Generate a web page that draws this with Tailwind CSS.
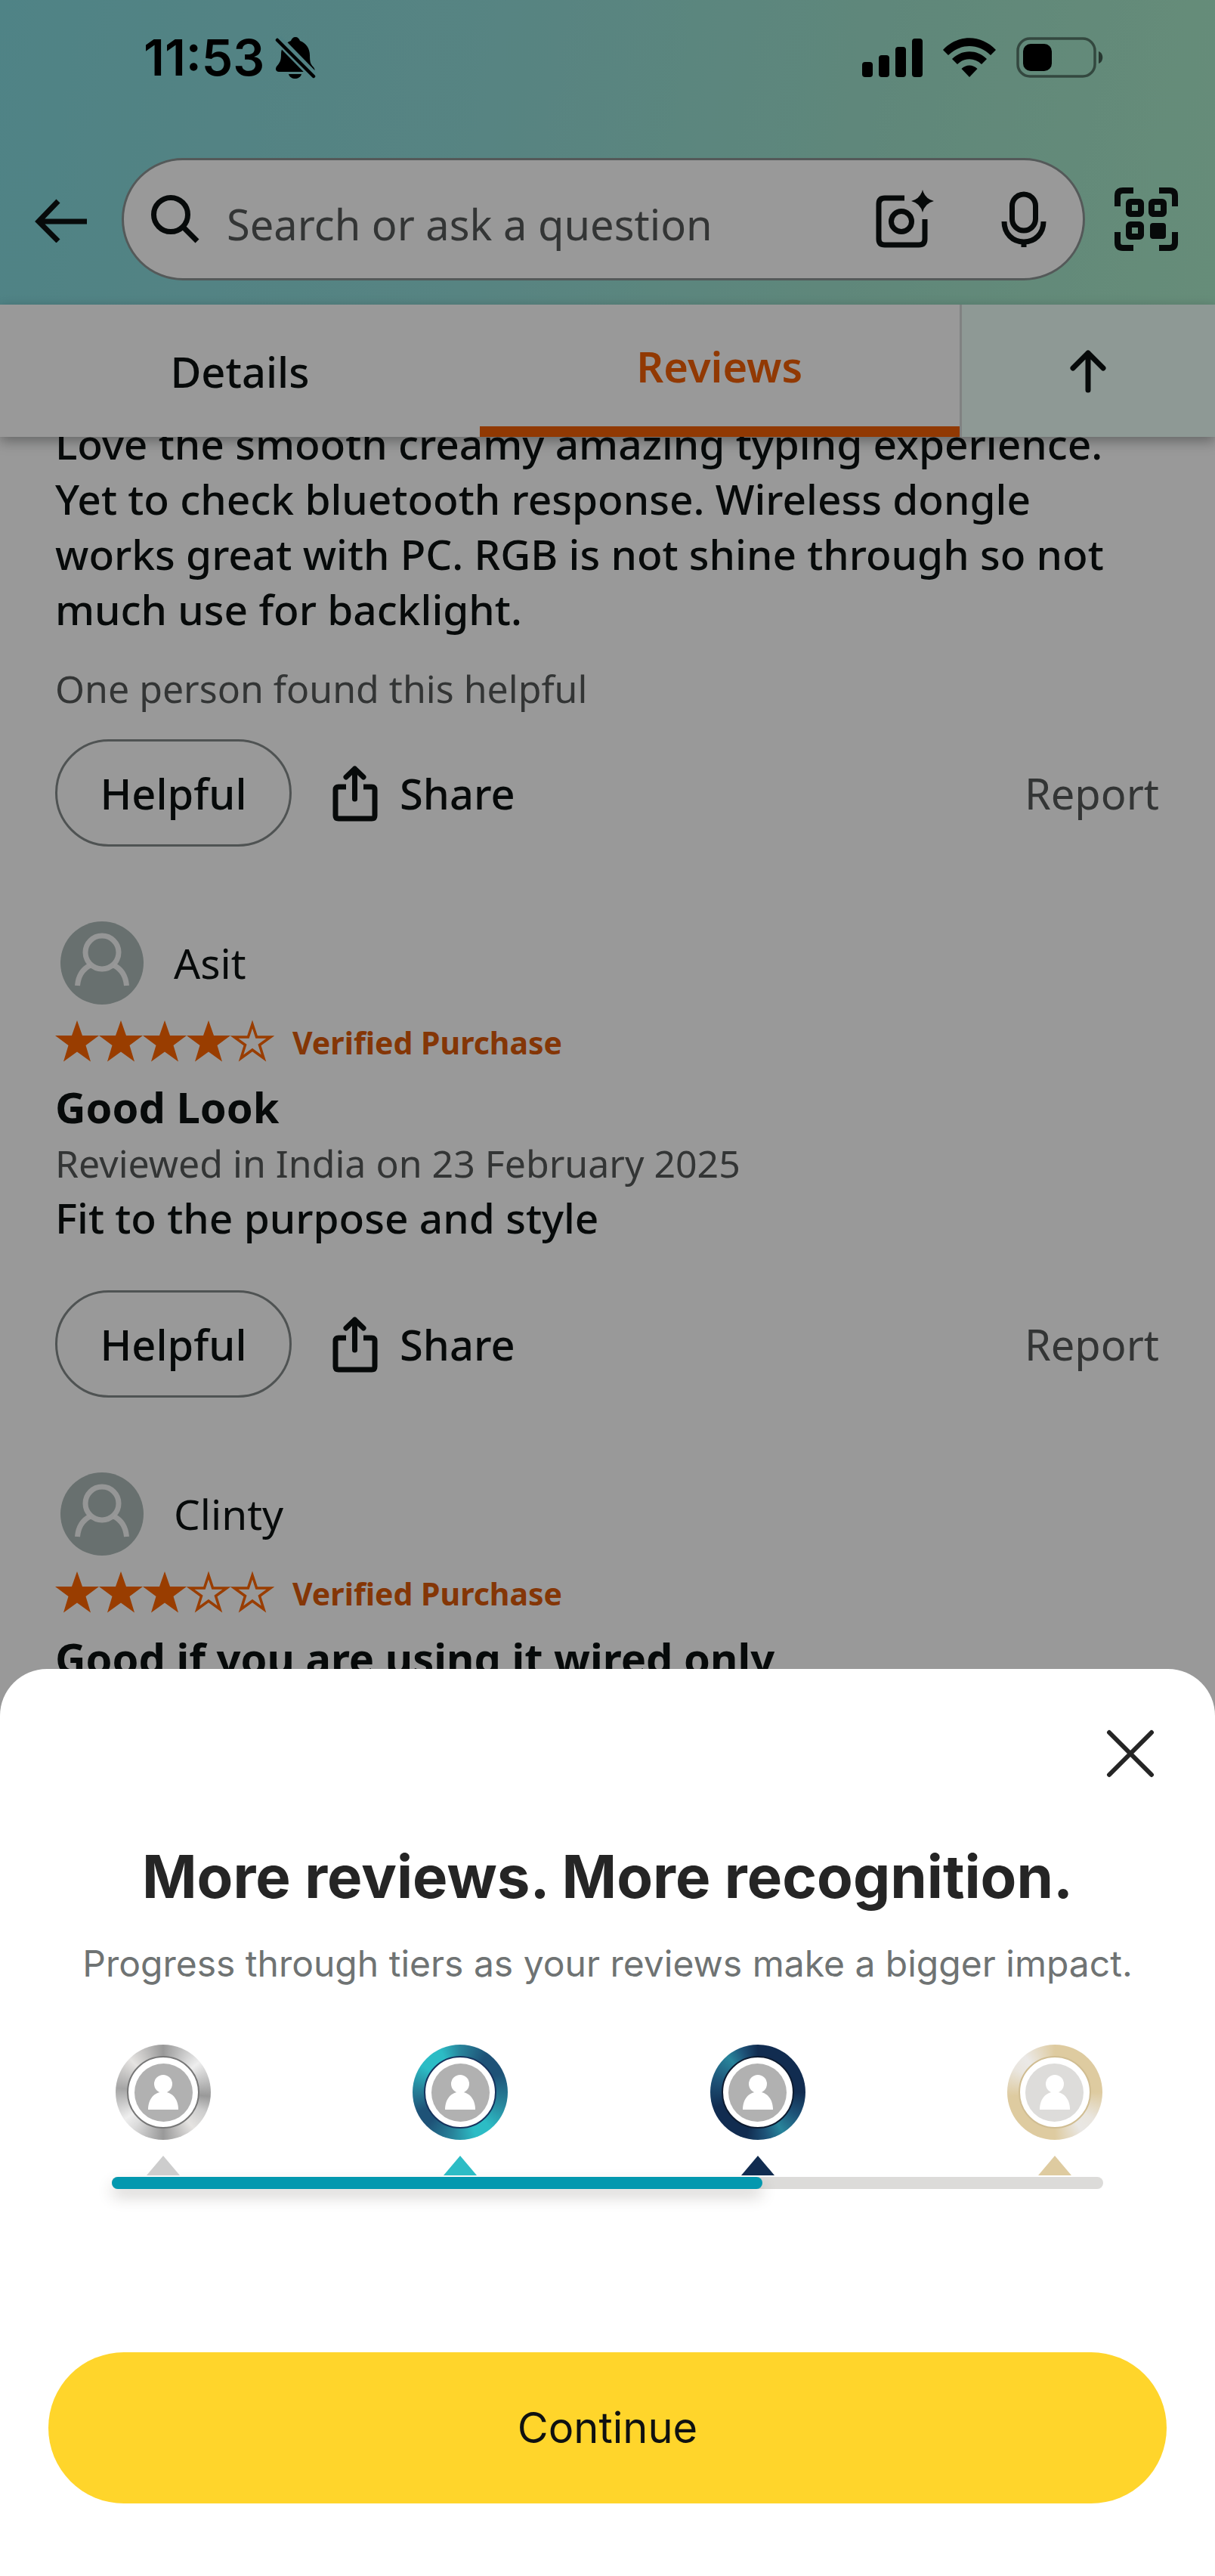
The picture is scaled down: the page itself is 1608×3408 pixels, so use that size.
<!DOCTYPE html>
<html lang="en">
<head>
<meta charset="utf-8">
<meta name="viewport" content="width=device-width, initial-scale=1">
<title>Reviews</title>
<script src="https://cdn.jsdelivr.net/npm/@tailwindcss/browser@4"></script>
</head>
<body class="relative h-screen overflow-hidden bg-white font-['Noto_Sans',sans-serif] text-[#0c1111]">

<svg class="hidden" aria-hidden="true">
  <defs>
    <symbol id="star" viewBox="0 0 58 56"><path d="M29 1l7 20h22L40.500 34 47 55.500 29 42.500 11 55.500 17.500 34 0 21h22z" fill="#ff6600"/></symbol>
    <symbol id="star-empty" viewBox="0 0 58 56"><path d="M29 6l5.600 17H53L38.500 33.500l5.500 17.500-15-11-15 11 5.500-17.500L5 23h18.400z" fill="none" stroke="#ff6600" stroke-width="3.500"/></symbol>
    <symbol id="avatar" viewBox="0 0 110 110">
      <circle cx="55" cy="55" r="55" fill="#aebbb9"/>
      <g fill="none" stroke="#fff" stroke-opacity=".92" stroke-width="7"><circle cx="55" cy="41" r="22"/><path d="M22.500 85c1-12 7-22 17-27M87.500 85c-1-12-7-22-17-27"/></g>
    </symbol>
    <symbol id="share" viewBox="0 0 60 76">
      <g fill="none" stroke="#0c1111" stroke-width="7" stroke-linecap="round" stroke-linejoin="round"><path stroke-linecap="butt" d="M18 30H8q-4 0-4 4v34q0 4 4 4h44q4 0 4-4V34q0-4-4-4H41"/><path d="M29.500 46V6M18 17L29.500 6 41 17"/></g>
    </symbol>
    <symbol id="person" viewBox="0 0 40 46"><circle cx="20" cy="12" r="12" fill="#fff"/><path d="M0 46C0 32 8 22.500 20 22.500S40 32 40 46z" fill="#fff"/></symbol>
  </defs>
</svg>

<header class="bg-linear-[100deg,#84dadf,#91dcd9_40%,#a1e3cb_75%,#abebca] h-[403px]">
  <div class="flex h-[152px] items-center justify-between pr-[148px] pl-[190px]">
    <div class="flex items-center gap-3.5">
      <span class="font-['Inter',sans-serif] text-[66px] leading-[66px] font-semibold text-black">11:53</span>
      <svg class="h-14 w-[54px]" viewBox="0 0 54 56"><path d="M27 1c3 0 5 2 6 5 8 3 13 10 13 19 0 9 1 12 5 16 3 4 1 6-2 6H5c-4 0-5-4-3-7 4-5 6-7 6-16 0-9 5-15 13-18 1-3 3-5 6-5zM18 50h17c-1 4-5 6-8.500 6S19 54 18 50z" fill="#000"/><path d="M4 4l48 49" stroke="#88d9dd" stroke-width="12"/><path d="M3 5l48 48" stroke="#000" stroke-width="4.500" stroke-linecap="round"/></svg>
    </div>
    <div class="flex items-center gap-[27px]">
      <svg class="h-[52px] w-20" viewBox="0 0 80 52" fill="#000"><rect y="32" width="14" height="20" rx="4"/><rect x="22" y="23" width="14" height="29" rx="4"/><rect x="44" y="12" width="14" height="40" rx="4"/><rect x="66" y="1" width="14" height="51" rx="4"/></svg>
      <svg class="h-[52px] w-[70px]" viewBox="0 0 70 52" fill="#000"><path d="M0 16C20-5 50-5 70 16L63 23C47 7 23 7 7 23zM12 28c13-13 33-13 46 0l-7 7c-9-9-23-9-32 0zM24.500 41c6-6 15-6 21 0L35 52z"/></svg>
      <svg class="h-[54px] w-[115px]" viewBox="0 0 115 54"><rect x="2" y="2" width="102" height="50" rx="16" fill="none" stroke="#000" stroke-opacity=".48" stroke-width="3.500"/><rect x="9" y="9" width="38" height="36" rx="10" fill="#000"/><path d="M109 19c7 2 7 14 0 16z" fill="#000" fill-opacity=".6"/></svg>
    </div>
  </div>
  <div class="mt-[57px] flex items-center pr-12 pl-[46px]">
    <button aria-label="Back" class="shrink-0 pt-1"><svg class="h-[58px] w-[70px]" viewBox="0 0 70 58" fill="none" stroke="#0c1111" stroke-width="7"><path d="M69 30H5M31 3L5 30l26 26"/></svg></button>
    <label class="ml-[45px] flex h-[162px] min-w-0 flex-1 items-center rounded-full border-[3px] border-[#8d9595] bg-white pr-12 pl-9">
      <svg class="size-16 shrink-0" viewBox="0 0 64 64" fill="none" stroke="#0c1111" stroke-width="7"><circle cx="26" cy="26" r="22.500"/><path d="M41 41l20 20"/></svg>
      <input type="search" aria-label="Search" placeholder="Search or ask a question" class="ml-9 min-w-0 flex-1 bg-transparent pt-3 text-[56px] outline-none placeholder:text-[#565959]">
      <button type="button" aria-label="Search by image" class="shrink-0"><svg class="h-[78px] w-[78px]" viewBox="0 0 78 78"><path d="M39 11H13q-8 0-8 8v46q0 8 8 8h45q8 0 8-8V39" fill="none" stroke="#0c1111" stroke-width="7"/><circle cx="35" cy="42" r="13.500" fill="none" stroke="#0c1111" stroke-width="7"/><path d="M63 0q3 12 15 15-12 3-15 15-3-12-15-15 12-3 15-15z" fill="#0c1111"/></svg></button>
      <button type="button" aria-label="Voice search" class="ml-[89px] shrink-0"><svg class="h-[74px] w-[60px]" viewBox="0 0 60 74" fill="none" stroke="#0c1111" stroke-width="7"><rect x="14.500" y="4" width="31" height="48" rx="15.500"/><path d="M4 40c0 16 11 27 26 27s26-11 26-27M30 67v7"/></svg></button>
    </label>
    <button aria-label="Scan code" class="ml-[38px] shrink-0"><svg class="h-[86px] w-[86px]" viewBox="0 0 86 86" fill="none" stroke="#0c1111" stroke-width="8"><path d="M26 5H12q-7 0-7 7v14M60 5h14q7 0 7 7v14M26 81H12q-7 0-7-7V60M60 81h14q7 0 7-7V60"/><rect x="20" y="20" width="16" height="16" rx="2"/><rect x="50" y="20" width="16" height="16" rx="2"/><rect x="20" y="50" width="16" height="16" rx="2"/><rect x="48" y="48" width="21" height="21" rx="4" fill="#0c1111" stroke="none"/></svg></button>
  </div>
</header>

<nav class="relative z-10 flex h-[175px] bg-white text-[56px] leading-[76px] shadow-[0_6px_16px_rgba(15,17,17,0.35)]">
  <a href="#details" class="flex flex-[636] items-center justify-center font-medium">Details</a>
  <a href="#reviews" class="flex flex-[636] items-center justify-center border-b-[14px] border-[#f26005] font-semibold text-[#f26005]">Reviews</a>
  <a href="#top" aria-label="Back to top" class="flex flex-[336] items-center justify-center border-l-[3px] border-[#d5d9d9] bg-[#edfff8]"><svg class="h-[58px] w-12" viewBox="0 0 48 58" fill="none" stroke="#0c1111" stroke-width="7" stroke-linecap="round" stroke-linejoin="round"><path d="M24 54V5M4 25L24 5l20 20"/></svg></a>
</nav>

<main class="-mt-7 pr-[74px] pl-[73px]">
  <article>
    <p class="text-[55px] leading-[73px] font-medium">Love the smooth creamy amazing typing experience.<br>Yet to check bluetooth response. Wireless dongle<br>works great with PC. RGB is not shine through so not<br>much use for backlight.</p>
    <p class="mt-[34px] text-[50px] leading-[70px] text-[#565959]">One person found this helpful</p>
    <div class="mt-8 flex h-[142px] items-center text-[56px]">
      <button class="h-[142px] w-[313px] rounded-full border-[3px] border-[#848a8a] font-medium">Helpful</button>
      <button class="ml-[54px] flex items-center gap-[29px] font-medium"><svg class="h-[76px] w-[60px]"><use href="#share"/></svg>Share</button>
      <a href="#report" class="ml-auto text-[#565959]">Report</a>
    </div>
  </article>

  <article class="mt-[99px]">
    <div class="flex items-center gap-10 pl-[7px]"><svg class="size-[110px]"><use href="#avatar"/></svg><span class="text-[55px] leading-[76px]">Asit</span></div>
    <div class="mt-5 flex items-center gap-6">
      <span class="flex" role="img" aria-label="4 out of 5 stars"><svg class="h-14 w-[58px]"><use href="#star"/></svg><svg class="h-14 w-[58px]"><use href="#star"/></svg><svg class="h-14 w-[58px]"><use href="#star"/></svg><svg class="h-14 w-[58px]"><use href="#star"/></svg><svg class="h-14 w-[58px]"><use href="#star-empty"/></svg></span>
      <span class="pt-1 text-[41px] leading-[52px] font-bold text-[#dd5a0a]">Verified Purchase</span>
    </div>
    <h3 class="mt-[21px] text-[56px] leading-[76px] font-bold">Good Look</h3>
    <p class="text-[50px] leading-[74px] text-[#565959]">Reviewed in India on 23 February 2025</p>
    <p class="text-[55px] leading-[70px] font-medium">Fit to the purpose and style</p>
    <div class="mt-[61px] flex h-[142px] items-center text-[56px]">
      <button class="h-[142px] w-[313px] rounded-full border-[3px] border-[#848a8a] font-medium">Helpful</button>
      <button class="ml-[54px] flex items-center gap-[29px] font-medium"><svg class="h-[76px] w-[60px]"><use href="#share"/></svg>Share</button>
      <a href="#report" class="ml-auto text-[#565959]">Report</a>
    </div>
  </article>

  <article class="mt-[99px]">
    <div class="flex items-center gap-10 pl-[7px]"><svg class="size-[110px]"><use href="#avatar"/></svg><span class="text-[55px] leading-[76px]">Clinty</span></div>
    <div class="mt-5 flex items-center gap-6">
      <span class="flex" role="img" aria-label="3 out of 5 stars"><svg class="h-14 w-[58px]"><use href="#star"/></svg><svg class="h-14 w-[58px]"><use href="#star"/></svg><svg class="h-14 w-[58px]"><use href="#star"/></svg><svg class="h-14 w-[58px]"><use href="#star-empty"/></svg><svg class="h-14 w-[58px]"><use href="#star-empty"/></svg></span>
      <span class="pt-1 text-[41px] leading-[52px] font-bold text-[#dd5a0a]">Verified Purchase</span>
    </div>
    <h3 class="mt-[21px] text-[56px] leading-[76px] font-bold">Good if you are using it wired only</h3>
  </article>
</main>

<div class="absolute inset-0 z-20 bg-black/40"></div>

<section role="dialog" aria-labelledby="sheet-title" class="absolute inset-x-0 bottom-0 z-30 rounded-t-[62px] bg-white px-16 pb-24 font-['Inter',sans-serif]">
  <div class="flex justify-end pt-20 pr-4"><button aria-label="Close"><svg class="size-16" viewBox="0 0 64 64" stroke="#252525" stroke-width="6" stroke-linecap="round"><path d="M4 4l56 56M60 4L4 60"/></svg></button></div>
  <h2 id="sheet-title" class="mt-[81px] text-center text-[78px] leading-[100px] font-bold whitespace-nowrap text-[#252525]">More reviews. More recognition.</h2>
  <p class="mt-9 text-center text-[48px] leading-[58px] whitespace-nowrap text-[#6f7373]">Progress through tiers as your reviews make a bigger impact.</p>

  <div class="mt-[78px] px-[84px]">
    <ul class="flex justify-between pr-px pl-[5px]">
      <li class="flex flex-col items-center gap-[21px]">
        <div class="grid size-[126px] place-items-center rounded-full bg-[conic-gradient(#999,#ddd_40deg,#eee_50deg,#999_95deg,#ccc_115deg,#e5e3e1_140deg,#999_180deg,#ddd_220deg,#eee_235deg,#a5a5a5_275deg,#e5e3e1_315deg,#999)]"><div class="grid size-24 place-items-center rounded-full border-2 border-[#777] bg-white"><div class="grid size-[77px] place-items-center rounded-full bg-[#b1b1b1]"><svg class="h-[46px] w-10"><use href="#person"/></svg></div></div></div>
        <svg class="h-[26px] w-11" viewBox="0 0 44 26"><path d="M22 0l22 26H0z" fill="#cdcdcd"/></svg>
      </li>
      <li class="flex flex-col items-center gap-[21px]">
        <div class="grid size-[126px] place-items-center rounded-full bg-[conic-gradient(#28849b,#1e5277_35deg,#1e5277_65deg,#28849b_105deg,#2cbcc5_140deg,#2cbcc5_160deg,#28849b_190deg,#1e5277_225deg,#1e5277_245deg,#28849b_275deg,#2cbcc5_305deg,#2cbcc5_335deg,#28849b)]"><div class="grid size-24 place-items-center rounded-full border-2 border-[#17345e] bg-white"><div class="grid size-[77px] place-items-center rounded-full bg-[#b1b1b1]"><svg class="h-[46px] w-10"><use href="#person"/></svg></div></div></div>
        <svg class="h-[26px] w-11" viewBox="0 0 44 26"><path d="M22 0l22 26H0z" fill="#2cbcc5"/></svg>
      </li>
      <li class="flex flex-col items-center gap-[21px]">
        <div class="grid size-[126px] place-items-center rounded-full bg-[conic-gradient(#112c50,#112c50_90deg,#1e5277_120deg,#28849b_148deg,#1e5277_170deg,#112c50_195deg,#112c50_250deg,#1e5277_285deg,#28849b_320deg,#1e5277_340deg,#112c50)]"><div class="grid size-24 place-items-center rounded-full border-2 border-[#0d1b30] bg-white"><div class="grid size-[77px] place-items-center rounded-full bg-[#b1b1b1]"><svg class="h-[46px] w-10"><use href="#person"/></svg></div></div></div>
        <svg class="h-[26px] w-11" viewBox="0 0 44 26"><path d="M22 0l22 26H0z" fill="#112c50"/></svg>
      </li>
      <li class="flex flex-col items-center gap-[21px]">
        <div class="grid size-[126px] place-items-center rounded-full bg-[conic-gradient(#decba0,#decba0_90deg,#e9e5de_125deg,#e9e7e4_145deg,#decba0_180deg,#decba0_265deg,#e9e5de_300deg,#ebe9e7_320deg,#decba0)]"><div class="grid size-24 place-items-center rounded-full border-2 border-[#d0bd92] bg-white"><div class="grid size-[77px] place-items-center rounded-full bg-[#dddcda]"><svg class="h-[46px] w-10"><use href="#person"/></svg></div></div></div>
        <svg class="h-[26px] w-11" viewBox="0 0 44 26"><path d="M22 0l22 26H0z" fill="#decba0"/></svg>
      </li>
    </ul>
    <div role="progressbar" aria-label="Tier progress" aria-valuenow="66" aria-valuemin="0" aria-valuemax="100" class="mt-0.5 h-4 rounded-full bg-[#dcdbd9]"><div class="h-4 rounded-full bg-[#0398af] shadow-[0_10px_20px_rgba(60,50,40,0.22)]" style="width:65.6%"></div></div>
  </div>

  <button class="mt-[216px] h-[200px] w-full rounded-full bg-[#ffd52b] text-[56px] text-[#0f1111]">Continue</button>
</section>
</body>
</html>
